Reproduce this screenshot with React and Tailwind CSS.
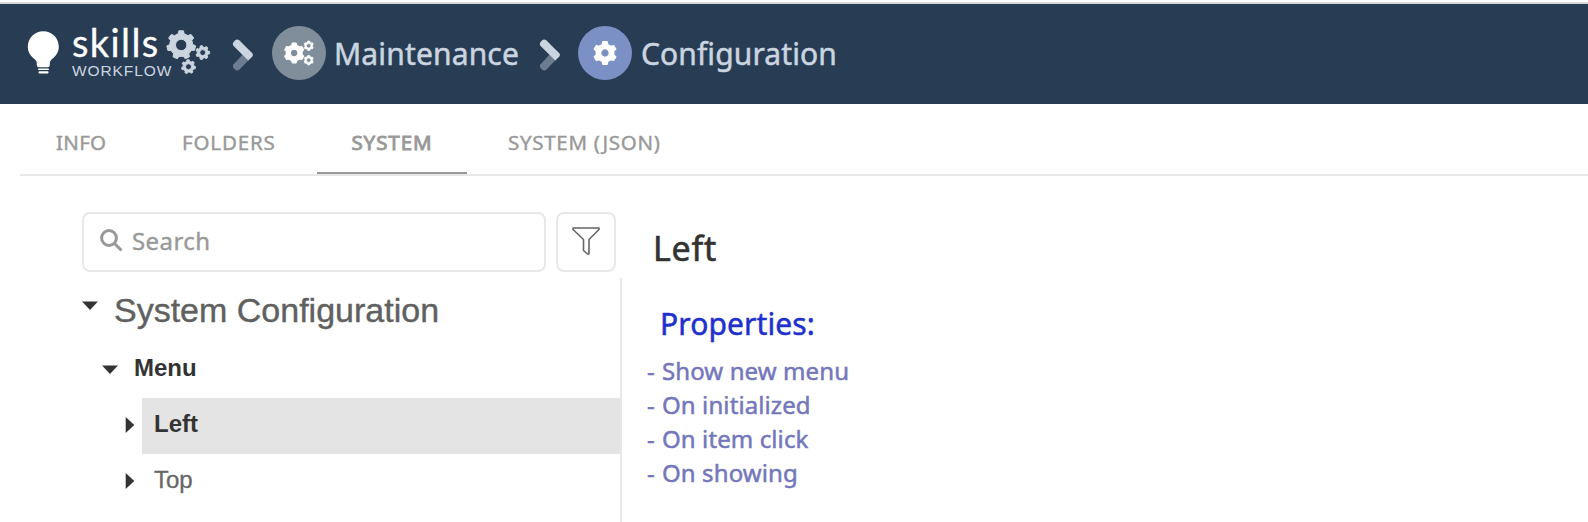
const ROUND = "font-['Noto_Sans',sans-serif]";
const HELV = "font-['Liberation_Sans',sans-serif]";

// Outline of a gear with a round hole, as path data.
function gearPath(cx, cy, r, inner, teeth, rot, hole) {
  const pts = [];
  const step = (Math.PI * 2) / teeth;
  for (let i = 0; i < teeth; i++) {
    const a = rot + i * step;
    [[-0.29, inner], [-0.18, r], [0.18, r], [0.29, inner]].forEach(([o, rad]) => {
      pts.push(`${(cx + rad * Math.cos(a + o * step)).toFixed(2)} ${(cy + rad * Math.sin(a + o * step)).toFixed(2)}`);
    });
  }
  return `M${pts.join("L")}ZM${cx + hole} ${cy}A${hole} ${hole} 0 1 0 ${cx - hole} ${cy}A${hole} ${hole} 0 1 0 ${cx + hole} ${cy}Z`;
}

const UP = Math.PI / 2;

function LogoGears() {
  return (
    <svg viewBox="0 0 46 46" className="h-[46px] w-[46px]" fill="#cbd5e0" fillRule="evenodd" stroke="#cbd5e0" strokeWidth="1" strokeLinejoin="round">
      <path d={gearPath(15.2, 15, 14.4, 11.6, 7, 0.22, 5.7)} />
      <path d={gearPath(36.7, 22.6, 7, 5.5, 7, 0, 3)} />
      <path d={gearPath(22.5, 36.7, 7, 5.5, 7, 0.15, 3)} />
    </svg>
  );
}

function CogsIcon() {
  return (
    <svg viewBox="0 0 30 26" className="h-[26px] w-[30px]" fill="#fff" fillRule="evenodd" stroke="#fff" strokeWidth="1.2" strokeLinejoin="round">
      <path d={gearPath(10.2, 13, 10, 8.1, 6, UP, 3.8)} />
      <path d={gearPath(24.7, 5.8, 4.8, 3.9, 6, UP, 2.3)} strokeWidth="0.8" />
      <path d={gearPath(24.7, 20.2, 4.8, 3.9, 6, UP, 2.3)} strokeWidth="0.8" />
    </svg>
  );
}

function CogIcon() {
  return (
    <svg viewBox="0 0 26 26" className="size-[26px]" fill="#fff" fillRule="evenodd" stroke="#fff" strokeWidth="1.4" strokeLinejoin="round">
      <path d={gearPath(13, 13, 11.4, 8.9, 6, UP, 4.4)} />
    </svg>
  );
}

function Chevron() {
  return (
    <svg viewBox="0 0 22 32" className="h-8 w-[22px]">
      <path d="M13 13L19.500 18L7.500 30.500Q5.200 32.400 3 30.600L1.600 29Q0 27 1.600 25.200Z" fill="#6d7d8f" />
      <path d="M1.600 7Q0 5 1.600 3L3 1.400Q5.200 -0.400 7.500 1.600L20.300 14.300Q21.500 16 20.300 17.500L16.300 21.400Z" fill="#cbd5e0" />
    </svg>
  );
}

function Caret({ open }) {
  return open ? (
    <svg viewBox="0 0 16 9" className="h-[9px] w-4"><path d="M0 0.500H16L8 9Z" fill="#333" /></svg>
  ) : (
    <svg viewBox="0 0 10 16" className="h-4 w-[10px]"><path d="M0.700 0V16L9.300 8Z" fill="#333" /></svg>
  );
}

export default function App() {
  return (
    <div className={`flex h-[522px] w-[1588px] flex-col overflow-hidden bg-white ${ROUND}`}>
      <div className="h-0.5 shrink-0 bg-white" />
      <header className="flex h-[102px] shrink-0 items-start border-t-2 border-[#d9d9d9] bg-[#283d54] pl-[27px] text-[30px] leading-[40px] text-[#cbd5e0]">
        <svg viewBox="0 0 32 43" className="mt-[27px] h-[43px] w-8 shrink-0" fill="#fff">
          <path d="M16.300 0.300C7.500 0.300 0.800 7.300 0.800 15.800C0.800 21.500 4 25.500 7.500 28Q9.800 29.800 9.800 32V34Q9.800 36.300 12 36.300H20.600Q22.800 36.300 22.800 34V32Q22.800 29.800 25 28C28.600 25.500 31.800 21.500 31.800 15.800C31.800 7.300 25.100 0.300 16.300 0.300Z" />
          <rect x="11" y="37.400" width="11" height="1.500" rx="0.700" />
          <rect x="11.500" y="40.200" width="10" height="2.200" rx="1" />
        </svg>
        <div className="ml-[13px] mt-[17px] flex w-[101px] shrink-0 flex-col whitespace-nowrap">
          <span className="h-[42px] font-['Lato',sans-serif] text-[38px] leading-[42px] tracking-[1.4px] text-white [-webkit-text-stroke:0.3px]">skills</span>
          <span className={`h-4 text-[15.5px] leading-4 tracking-[0.9px] ${HELV}`}>WORKFLOW</span>
        </div>
        <div className="-ml-[7px] mt-[26px] shrink-0"><LogoGears /></div>
        <div className="ml-[20px] mt-[35px] shrink-0"><Chevron /></div>
        <div className="ml-[18px] mt-[22px] flex size-[54px] shrink-0 items-center justify-center rounded-full bg-[#808e9b]">
          <CogsIcon />
        </div>
        <span className="ml-[8px] mt-[30px] w-[205px] shrink-0 tracking-[0.15px] [-webkit-text-stroke:0.5px]">Maintenance</span>
        <div className="mt-[35px] shrink-0"><Chevron /></div>
        <div className="ml-[17px] mt-[22px] flex size-[54px] shrink-0 items-center justify-center rounded-full bg-[#7b90c4]">
          <CogIcon />
        </div>
        <span className="ml-[9px] mt-[30px] tracking-[0.1px] [-webkit-text-stroke:0.5px]">Configuration</span>
      </header>
      <nav className="ml-5 flex h-[72px] shrink-0 border-b-2 border-[#e8e8e8] pl-[36px] text-[20.5px] leading-[28px] text-[#999] whitespace-nowrap [-webkit-text-stroke:0.4px]">
        <span className="mt-[24px] w-[126px] tracking-[0.3px]">INFO</span>
        <span className="mt-[24px] w-[135px] tracking-[0.85px]">FOLDERS</span>
        <span className="flex h-[70px] w-[150px] flex-col items-center rounded-t-[2px] border-b-2 border-[#999]">
          <span className="mt-[24px] tracking-[0.95px] [-webkit-text-stroke:0.9px]">SYSTEM</span>
        </span>
        <span className="ml-[41px] mt-[24px] tracking-[0.7px]">SYSTEM (JSON)</span>
      </nav>
      <main className="flex grow">
        <section className={`w-[622px] shrink-0 ${HELV}`}>
          <div className={`flex h-[102px] gap-[10px] pl-[82px] pt-[36px] ${ROUND}`}>
            <div className="flex h-[60px] w-[464px] items-start rounded-[8px] border-2 border-[#e8e8e8] pl-4 text-[24px] leading-[32px] text-[#999]">
              <svg viewBox="0 0 23 23" className="mr-[9px] mt-[15px] size-[23px]" fill="none" stroke="#999" strokeWidth="3">
                <circle cx="9" cy="9" r="7.400" />
                <path d="M14 14L21.500 21.500" />
              </svg>
              <span className="mt-[11px] tracking-[0.4px] [-webkit-text-stroke:0.4px]">Search</span>
            </div>
            <div className="flex size-[60px] items-center justify-center rounded-[8px] border-2 border-[#e8e8e8]">
              <svg viewBox="0 0 28 28" className="-mt-0.5 size-7" fill="none" stroke="#666" strokeWidth="1.600" strokeLinejoin="round">
                <path d="M1 1H27V2.500L17 12.500V27H15.500L11.500 23.500V12.500L1 2.500Z" />
              </svg>
            </div>
          </div>
          <div className="h-[244px] border-r-2 border-[#e8e8e8] whitespace-nowrap">
            <div className="flex h-[64px] items-start pl-[82px]">
              <div className="mt-[23px]"><Caret open /></div>
              <span className="ml-[16px] mt-[12px] text-[34px] leading-[40px] text-[#606060] [-webkit-text-stroke:0.4px]">System Configuration</span>
            </div>
            <div className="flex h-[56px] items-start pl-[102px]">
              <div className="mt-[23px]"><Caret open /></div>
              <span className="ml-[16px] mt-[12px] text-[24px] leading-[28px] font-bold text-[#333]">Menu</span>
            </div>
            <div className="flex h-[56px] items-start pl-[125px]">
              <div className="mt-[19px]"><Caret /></div>
              <div className="ml-[7px] h-[56px] grow bg-[#e4e4e4] pl-3 pt-[12px] text-[24px] leading-[28px] font-bold text-[#333]">Left</div>
            </div>
            <div className="flex h-[56px] items-start pl-[125px]">
              <div className="mt-[19px]"><Caret /></div>
              <div className="ml-[7px] grow pl-3 pt-[12px] text-[24px] leading-[28px] text-[#666] [-webkit-text-stroke:0.3px]">Top</div>
            </div>
          </div>
        </section>
        <section className="pl-[25px] whitespace-nowrap">
          <h1 className="mt-[49px] pl-[6px] text-[34px] leading-[46px] tracking-[0.8px] text-[#333] [-webkit-text-stroke:0.6px]">Left</h1>
          <h2 className="mt-[33px] pl-[13px] text-[30px] leading-[40px] tracking-[0.1px] text-[#2030cc] [-webkit-text-stroke:0.5px]">Properties:</h2>
          <ul className="mt-[10px] text-[24px] leading-[34px] tracking-[0.1px] text-[#7477bb] [-webkit-text-stroke:0.5px]">
            {["Show new menu", "On initialized", "On item click", "On showing"].map((t) => (
              <li key={t} className="flex"><span className="w-[15px]">-</span><span>{t}</span></li>
            ))}
          </ul>
        </section>
      </main>
    </div>
  );
}
